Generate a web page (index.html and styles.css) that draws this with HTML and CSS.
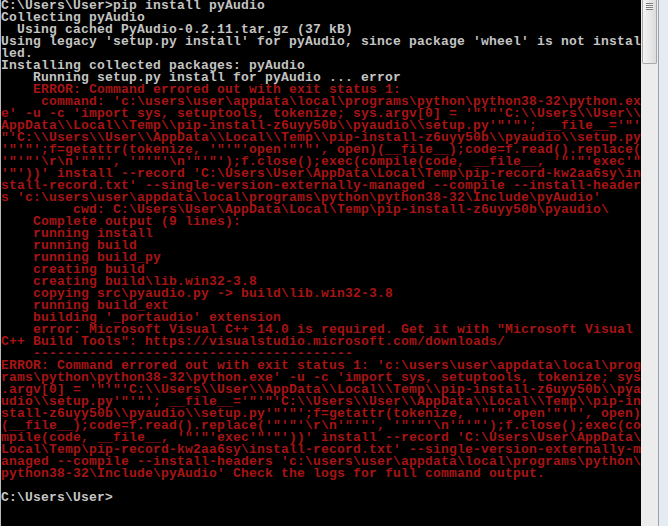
FILE: index.html
```html
<!DOCTYPE html>
<html>
<head>
<meta charset="utf-8">
<link rel="stylesheet" href="styles.css">
</head>
<body>
<div class="window">
  <div class="edge"></div>
  <div class="console">
<div class="ln w">C:\Users\User&gt;pip install pyAudio</div>
<div class="ln w">Collecting pyAudio</div>
<div class="ln w">  Using cached PyAudio-0.2.11.tar.gz (37 kB)</div>
<div class="ln w">Using legacy 'setup.py install' for pyAudio, since package 'wheel' is not instal</div>
<div class="ln w">led.</div>
<div class="ln w">Installing collected packages: pyAudio</div>
<div class="ln w">    Running setup.py install for pyAudio ... error</div>
<div class="ln r">    ERROR: Command errored out with exit status 1:</div>
<div class="ln r">     command: 'c:\users\user\appdata\local\programs\python\python38-32\python.ex</div>
<div class="ln r">e' -u -c 'import sys, setuptools, tokenize; sys.argv[0] = '"'"'C:\\Users\\User\\</div>
<div class="ln r">AppData\\Local\\Temp\\pip-install-z6uyy50b\\pyaudio\\setup.py'"'"'; __file__='"'</div>
<div class="ln r">"'C:\\Users\\User\\AppData\\Local\\Temp\\pip-install-z6uyy50b\\pyaudio\\setup.py</div>
<div class="ln r">'"'"';f=getattr(tokenize, '"'"'open'"'"', open)(__file__);code=f.read().replace(</div>
<div class="ln r">'"'"'\r\n'"'"', '"'"'\n'"'"');f.close();exec(compile(code, __file__, '"'"'exec'"</div>
<div class="ln r">'"'))' install --record 'C:\Users\User\AppData\Local\Temp\pip-record-kw2aa6sy\in</div>
<div class="ln r">stall-record.txt' --single-version-externally-managed --compile --install-header</div>
<div class="ln r">s 'c:\users\user\appdata\local\programs\python\python38-32\Include\pyAudio'</div>
<div class="ln r">         cwd: C:\Users\User\AppData\Local\Temp\pip-install-z6uyy50b\pyaudio\</div>
<div class="ln r">    Complete output (9 lines):</div>
<div class="ln r">    running install</div>
<div class="ln r">    running build</div>
<div class="ln r">    running build_py</div>
<div class="ln r">    creating build</div>
<div class="ln r">    creating build\lib.win32-3.8</div>
<div class="ln r">    copying src\pyaudio.py -&gt; build\lib.win32-3.8</div>
<div class="ln r">    running build_ext</div>
<div class="ln r">    building '_portaudio' extension</div>
<div class="ln r">    error: Microsoft Visual C++ 14.0 is required. Get it with "Microsoft Visual </div>
<div class="ln r">C++ Build Tools": https://visualstudio.microsoft.com/downloads/</div>
<div class="ln r">    ----------------------------------------</div>
<div class="ln r">ERROR: Command errored out with exit status 1: 'c:\users\user\appdata\local\prog</div>
<div class="ln r">rams\python\python38-32\python.exe' -u -c 'import sys, setuptools, tokenize; sys</div>
<div class="ln r">.argv[0] = '"'"'C:\\Users\\User\\AppData\\Local\\Temp\\pip-install-z6uyy50b\\pya</div>
<div class="ln r">udio\\setup.py'"'"'; __file__='"'"'C:\\Users\\User\\AppData\\Local\\Temp\\pip-in</div>
<div class="ln r">stall-z6uyy50b\\pyaudio\\setup.py'"'"';f=getattr(tokenize, '"'"'open'"'"', open)</div>
<div class="ln r">(__file__);code=f.read().replace('"'"'\r\n'"'"', '"'"'\n'"'"');f.close();exec(co</div>
<div class="ln r">mpile(code, __file__, '"'"'exec'"'"'))' install --record 'C:\Users\User\AppData\</div>
<div class="ln r">Local\Temp\pip-record-kw2aa6sy\install-record.txt' --single-version-externally-m</div>
<div class="ln r">anaged --compile --install-headers 'c:\users\user\appdata\local\programs\python\</div>
<div class="ln r">python38-32\Include\pyAudio' Check the logs for full command output.</div>
<div class="ln w"> </div>
<div class="ln w">C:\Users\User&gt;</div>
  </div>
  <div class="scrollbar">
    <div class="thumb"><div class="grip"></div></div>
  </div>
  <div class="frame"></div>
</div>
</body>
</html>
```
FILE: styles.css
```css
html, body {
  margin: 0;
  padding: 0;
  background: #000;
}
.window {
  display: flex;
  width: 668px;
  height: 526px;
  overflow: hidden;
}
.edge {
  width: 1px;
  background: #b8b8b8;
}
.console {
  width: 641px;
  background: #000;
  font-family: "Liberation Mono", monospace;
  font-weight: bold;
  font-size: 13px;
  letter-spacing: 0.2px;
  line-height: 12px;
}
.ln {
  white-space: pre;
  height: 12px;
}
.w { color: #c4c4c4; }
.r { color: #a81414; }
.scrollbar {
  width: 17px;
  background: #ececec;
  display: flex;
  flex-direction: column;
}
.thumb {
  height: 64px;
  margin: 0 1px;
  background: linear-gradient(to right, #f4f4f4, #dcdcdc);
  border: 1px solid #a8a8a8;
  border-top: none;
  border-radius: 0 0 2px 2px;
  padding-top: 3px;
  box-sizing: border-box;
}
.grip {
  width: 7px;
  height: 7px;
  margin: 0 auto;
  background: repeating-linear-gradient(to bottom, #7c7c7c 0 1px, #f4f4f4 1px 2px);
}
.frame {
  width: 9px;
  border-left: 1px solid #9aa3ad;
  background: #e6ebf1;
}
```
